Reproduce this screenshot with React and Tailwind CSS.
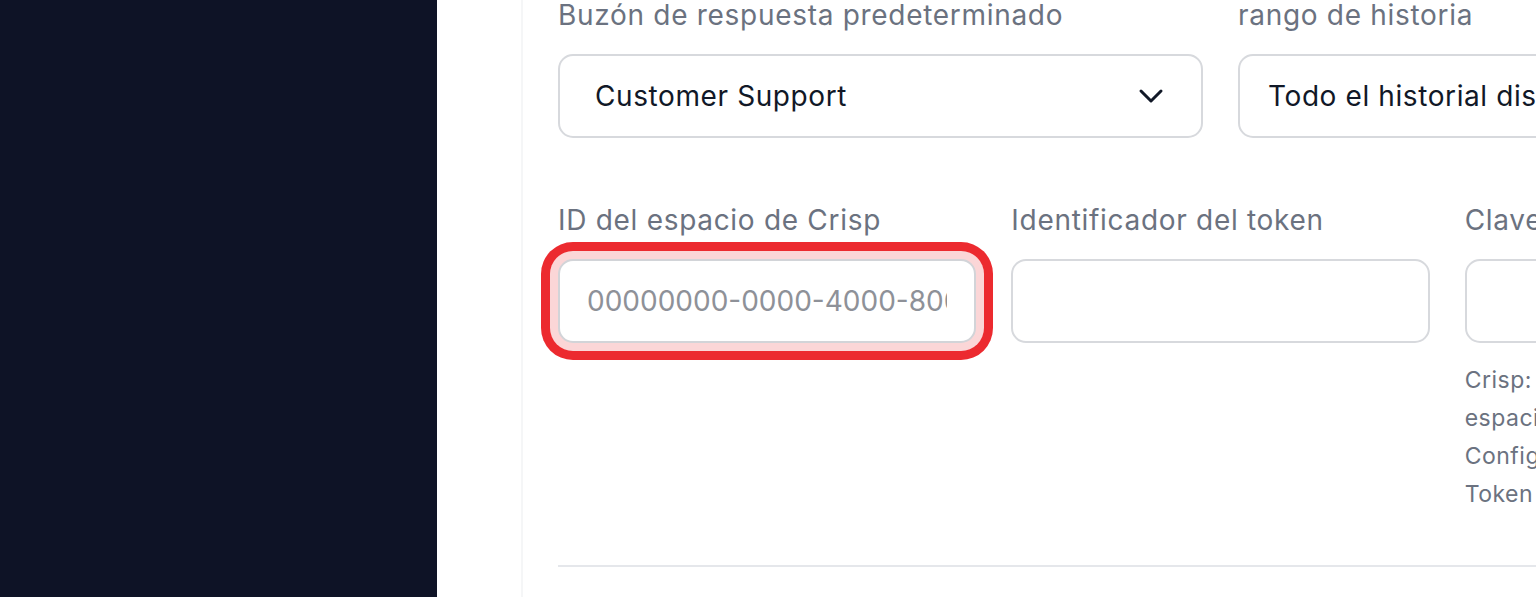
import { ChevronDown } from "lucide-react"

function Field({ label, children, className = "" }) {
    return (
        <div className={`flex flex-col ${className}`}>
            <label className="block text-[28px] tracking-[0.7px] leading-[40px] text-[#6b7280] mb-[19px] whitespace-nowrap">{label}</label>
            {children}
        </div>
    )
}

export default function App() {
    return (
        <div className="flex h-[597px] w-full overflow-hidden bg-white" style={{ fontFamily: "Inter, 'Noto Sans', sans-serif" }}>
            <div className="w-[437px] shrink-0 bg-[#0e1326]"></div>

            <div className="w-[86px] shrink-0 border-r-2 border-[#f5f6f7]"></div>

            <div className="pl-[35px] shrink-0 -mt-[5px]">
                <div className="w-[1325px]">
                    {/* inbox + history row */}
                    <div className="grid grid-cols-2 gap-x-[35px]">
                        <Field label="Buzón de respuesta predeterminado">
                            <button className="h-[84px] w-full rounded-[15px] border-2 border-[#d7d9dd] bg-white flex items-center justify-between pl-[35px] pr-[30px] text-[28px] tracking-[0.6px] text-[#111827]">
                                <span>Customer Support</span>
                                <ChevronDown className="w-[40px] h-[40px] text-[#111827]" strokeWidth={1.8} />
                            </button>
                        </Field>
                        <Field label="rango de historia">
                            <button className="h-[84px] w-full rounded-[15px] border-2 border-[#d7d9dd] bg-white flex items-center justify-between pl-[28px] pr-[30px] text-[28px] tracking-[0.6px] text-[#111827] whitespace-nowrap">
                                <span>Todo el historial disponible</span>
                                <ChevronDown className="w-[40px] h-[40px] text-[#111827]" strokeWidth={1.8} />
                            </button>
                        </Field>
                    </div>

                    {/* crisp credentials */}
                    <div className="grid grid-cols-3 gap-x-[35px] mt-[62px] items-start">
                        <Field label="ID del espacio de Crisp">
                            <input
                                className="h-[84px] w-full rounded-[15px] border-2 border-[#d2d4d8] bg-white px-[27px] text-[28px] text-[#111827] placeholder:text-[#8e9198] outline-none shadow-[0_0_0_8px_#fbd6d7,0_0_0_17px_#ec2a2f]"
                                type="text"
                                placeholder="00000000-0000-4000-8000-000000000000"
                            />
                        </Field>
                        <Field label="Identificador del token">
                            <input className="h-[84px] w-full rounded-[15px] border-2 border-[#d7d9dd] bg-white px-[27px] text-[28px] outline-none" type="text" />
                        </Field>
                        <Field label="Clave del token">
                            <input className="h-[84px] w-full rounded-[15px] border-2 border-[#d7d9dd] bg-white px-[27px] text-[28px] outline-none" type="password" />
                            <p className="mt-[18px] text-[23px] tracking-[0.5px] leading-[38px] text-[#6b7280]">
                                Crisp: busque el ID del<br />
                                espacio de trabajo en<br />
                                Configuración &gt; Ajustes &gt;<br />
                                Token de plugin.
                            </p>
                        </Field>
                    </div>

                    <div className="mt-[52px] border-t-2 border-[#e5e7eb]"></div>
                </div>
            </div>
        </div>
    )
}
